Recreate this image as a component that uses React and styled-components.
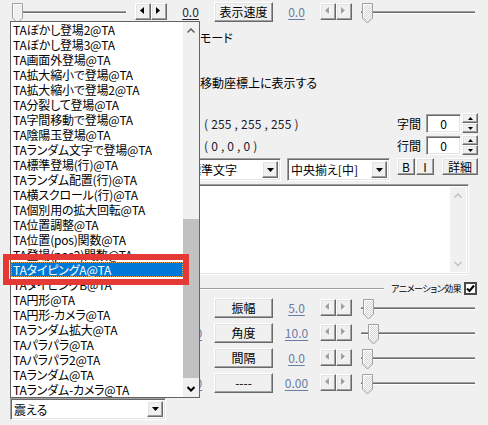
import React, { useId } from "react";
import styled, { createGlobalStyle, css } from "styled-components";

const GlobalStyle = createGlobalStyle`
  html, body { margin: 0; padding: 0; background: #f0f0f0; }
  body {
    width: 488px; height: 425px; overflow: hidden;
    font-family: "Noto Sans CJK JP", "Noto Sans", sans-serif;
    font-size: 12px; color: #000;
    font-feature-settings: "palt";
  }
  * { box-sizing: border-box; }
`;

const LIST_ITEMS = [
  "TAぼかし登場2@TA", "TAぼかし登場3@TA", "TA画面外登場@TA", "TA拡大縮小で登場@TA",
  "TA拡大縮小で登場2@TA", "TA分裂して登場@TA", "TA字間移動で登場@TA", "TA陰陽玉登場@TA",
  "TAランダム文字で登場@TA", "TA標準登場(行)@TA", "TAランダム配置(行)@TA", "TA横スクロール(行)@TA",
  "TA個別用の拡大回転@TA", "TA位置調整@TA", "TA位置(pos)関数@TA", "TA登場(pos2)関数@TA",
  "TAタイピングA@TA", "TAタイピングB@TA", "TA円形@TA", "TA円形-カメラ@TA",
  "TAランダム拡大@TA", "TAパラパラ@TA", "TAパラパラ2@TA", "TAランダム@TA", "TAランダム-カメラ@TA",
];
const SELECTED = 16;

const PARAMS = [
  { label: "振幅", left: "5.0", right: "5.0", thumb: 5 },
  { label: "角度", left: "10.0", right: "10.0", thumb: 10 },
  { label: "間隔", left: "0.0", right: "0.0", thumb: 4 },
  { label: "----", left: "0.00", right: "0.00", thumb: 4 },
];

const raised = css`
  background: #f0f0f0;
  border: 1px solid;
  border-color: #fff #696969 #696969 #fff;
  box-shadow: inset -1px -1px #a0a0a0, inset 1px 1px #e3e3e3;
`;

const sunken = css`
  background: #fff;
  border: 1px solid;
  border-color: #a0a0a0 #fff #fff #a0a0a0;
  box-shadow: inset 1px 1px #696969, inset -1px -1px #e3e3e3;
`;

const Dialog = styled.div`
  position: relative;
  width: 488px;
  height: 425px;
  overflow: hidden;
  display: flex;
  flex-direction: column;
`;

const TopRow = styled.div`
  padding-top: 2px;
  height: 24px;
`;

const ParamGrid = styled.div`
  display: grid;
  grid-template-columns: 126px 32px 47px 59px 47px 32px 126px;
  grid-template-rows: 20px;
  padding-left: 9px;
  height: 20px;
  align-items: start;
`;

const SliderBox = styled.div`
  width: 120px;
  height: 20px;
  justify-self: ${(p) => (p.$side === "left" ? "start" : "end")};
  svg { display: block; overflow: visible; }
`;

const Spinner = styled.div`
  display: flex;
  margin-top: 1px;
  justify-self: ${(p) => (p.$side === "left" ? "end" : "start")};
`;

const SpinBtn = styled.div`
  ${raised};
  width: 16px;
  height: 17px;
  display: flex;
  align-items: center;
  justify-content: center;
  svg { display: block; }
`;

const Value = styled.span`
  text-align: center;
  line-height: 20px;
  text-decoration: underline;
  text-underline-offset: 2px;
  color: ${(p) => p.$color};
  font-size: 12px;
`;

const Button = styled.div`
  ${raised};
  width: ${(p) => p.$w || 59}px;
  height: ${(p) => p.$h || 20}px;
  display: flex;
  align-items: center;
  justify-content: center;
  font-size: ${(p) => p.$fs || 12}px;
  line-height: 1;
  white-space: nowrap;
`;

const Middle = styled.div`
  display: flex;
  flex-direction: column;
  margin-left: 185px;
  margin-right: 10px;
`;

const Line = styled.div`
  height: ${(p) => p.$h}px;
  margin-top: ${(p) => p.$mt || 0}px;
  padding-left: ${(p) => p.$pl || 15}px;
  display: flex;
  align-items: center;
  white-space: nowrap;
`;

const Coords = styled.span`
  color: #1a1a2a;
  letter-spacing: 0.2px;
`;

const FieldLabel = styled.span`
  margin-left: auto;
  margin-right: 5px;
`;

const NumInput = styled.div`
  ${sunken};
  width: 35px;
  height: 19px;
  display: flex;
  align-items: center;
  justify-content: center;
  margin-right: 1px;
`;

const VSpin = styled.div`
  display: flex;
  flex-direction: column;
`;

const VSpinBtn = styled.div`
  ${raised};
  width: 16px;
  height: 10px;
  display: flex;
  align-items: center;
  justify-content: center;
  svg { display: block; }
`;

const ControlsRow = styled.div`
  display: flex;
  align-items: flex-start;
  margin-top: 2px;
  height: 23px;
`;

const Combo = styled.div`
  ${sunken};
  width: ${(p) => p.$w}px;
  height: ${(p) => p.$h || 23}px;
  display: flex;
  padding: 2px;
`;

const ComboText = styled.div`
  flex: 1;
  padding-left: 1px;
  display: flex;
  align-items: center;
  white-space: nowrap;
  overflow: hidden;
`;

const ComboArrow = styled.div`
  ${raised};
  width: 16px;
  height: 100%;
  display: flex;
  align-items: center;
  justify-content: center;
  svg { display: block; }
`;

const Gap = styled.div`
  width: ${(p) => p.$w}px;
  flex: none;
`;

const TextArea = styled.div`
  ${sunken};
  margin-top: 3px;
  height: 91px;
  width: 284px;
  display: flex;
  justify-content: flex-end;
  padding: 2px;
`;

const AreaScroll = styled.div`
  width: 16px;
  background: #f0f0f0;
  display: flex;
  flex-direction: column;
  justify-content: space-between;
`;

const ScrollArrow = styled.div`
  height: 17px;
  display: flex;
  align-items: center;
  justify-content: center;
  svg { display: block; }
`;

const SepRow = styled.div`
  margin-top: 6px;
  height: 15px;
  display: flex;
  align-items: center;
`;

const SepLine = styled.div`
  width: 199px;
  height: 2px;
  border-top: 1px solid #a0a0a0;
  border-bottom: 1px solid #fff;
`;

const SmallLabel = styled.span`
  margin-left: 7px;
  font-size: 9px;
  letter-spacing: -0.4px;
  white-space: nowrap;
`;

const CheckBox = styled.div`
  margin-left: auto;
  margin-right: 1px;
  width: 13px;
  height: 13px;
  background: #fff;
  border: 2px solid #4a4a4a;
  display: flex;
  align-items: center;
  justify-content: center;
  svg { display: block; }
`;

const ParamList = styled.div`
  margin-top: 2px;
  display: flex;
  flex-direction: column;
  gap: 5px;
`;

const BottomCombo = styled(Combo)`
  margin-top: 5px;
  margin-left: 10px;
`;

const ListBox = styled.div`
  position: absolute;
  left: 10px;
  top: 21px;
  width: 190px;
  height: 377px;
  border: 1px solid #646464;
  background: #fff;
  display: flex;
`;

const ItemsCol = styled.div`
  flex: 1;
  display: flex;
  flex-direction: column;
  overflow: hidden;
`;

const Item = styled.div`
  height: 15px;
  line-height: 15px;
  padding-left: 2px;
  white-space: nowrap;
  letter-spacing: -0.2px;
  ${(p) =>
    p.$selected &&
    css`
      background: #0078d7;
      color: #fff;
      outline: 1px dotted #f2a33a;
      outline-offset: -1px;
    `}
`;

const ListScroll = styled.div`
  width: 16px;
  background: #f0f0f0;
  display: flex;
  flex-direction: column;
`;

const ScrollTrack = styled.div`
  flex: 1;
  display: flex;
  flex-direction: column;
`;

const ScrollThumb = styled.div`
  margin-top: ${(p) => p.$offset}px;
  height: ${(p) => p.$size}px;
  background: #c1c1c1;
`;

const Highlight = styled.div`
  position: absolute;
  left: 3px;
  top: 254px;
  width: 186px;
  height: 31px;
  border: 6px solid #e53935;
  pointer-events: none;
`;

function HArrow({ dir, disabled }) {
  const main = dir === "left" ? "4,0 0,3.5 4,7" : "0,0 4,3.5 0,7";
  const shadow = dir === "left" ? "5,1 1,4.5 5,8" : "1,1 5,4.5 1,8";
  return (
    <svg width="6" height="9" viewBox="0 0 6 9">
      {disabled && <polygon points={shadow} fill="#fff" />}
      <polygon points={main} fill={disabled ? "#a0a0a0" : "#000"} />
    </svg>
  );
}

function VArrow({ dir, w = 7, h = 4 }) {
  const pts = dir === "up" ? `0,${h} ${w / 2},0 ${w},${h}` : `0,0 ${w / 2},${h} ${w},0`;
  return (
    <svg width={w} height={h} viewBox={`0 0 ${w} ${h}`}>
      <polygon points={pts} fill="#000" />
    </svg>
  );
}

function Chevron({ dir, color, sw = 1.5 }) {
  const pts = dir === "up" ? "0.5,4.5 4,1 7.5,4.5" : "0.5,1 4,4.5 7.5,1";
  return (
    <svg width="8" height="6" viewBox="0 0 8 6">
      <polyline points={pts} fill="none" stroke={color} strokeWidth={sw} />
    </svg>
  );
}

function Slider({ thumb, enabled, side }) {
  const id = useId().replace(/:/g, "");
  const t = thumb;
  return (
    <SliderBox $side={side}>
      <svg width="120" height="24" viewBox="0 0 120 24">
        <defs>
          <pattern id={`p${id}`} width="2" height="2" patternUnits="userSpaceOnUse">
            <rect width="2" height="2" fill="#fff" />
            <rect width="1" height="1" fill="#d4d4d4" />
            <rect x="1" y="1" width="1" height="1" fill="#d4d4d4" />
          </pattern>
        </defs>
        <rect x="3" y="9" width="114" height="1" fill="#a0a0a0" />
        <rect x="3" y="10" width="114" height="1" fill="#6a6a6a" />
        <rect x="3" y="11" width="114" height="1" fill="#fff" />
        <polygon
          points={`${t + 0.5},1.5 ${t + 10.5},1.5 ${t + 10.5},16 ${t + 5.5},21 ${t + 0.5},16`}
          fill={enabled ? "#f0f0f0" : `url(#p${id})`}
          stroke="#a0a0a0"
        />
        <polyline
          points={`${t + 1.5},15.5 ${t + 1.5},2.5 ${t + 9.5},2.5`}
          fill="none"
          stroke="#fff"
        />
      </svg>
    </SliderBox>
  );
}

function HSpinner({ side, disabled }) {
  return (
    <Spinner $side={side}>
      <SpinBtn>
        <HArrow dir="left" disabled={disabled} />
      </SpinBtn>
      <SpinBtn>
        <HArrow dir="right" disabled={disabled} />
      </SpinBtn>
    </Spinner>
  );
}

function ParamRow({ label, left, right, thumb, leftColor, leftEnabled }) {
  return (
    <ParamGrid>
      <Slider side="left" thumb={3} enabled={leftEnabled} />
      <HSpinner side="left" disabled={!leftEnabled} />
      <Value $color={leftColor}>{left}</Value>
      <Button>{label}</Button>
      <Value $color="#6b7ca3">{right}</Value>
      <HSpinner side="right" disabled />
      <Slider side="right" thumb={thumb} />
    </ParamGrid>
  );
}

function SpacingField({ label }) {
  return (
    <>
      <FieldLabel>{label}</FieldLabel>
      <NumInput>0</NumInput>
      <VSpin>
        <VSpinBtn>
          <VArrow dir="up" w={5} h={3} />
        </VSpinBtn>
        <VSpinBtn>
          <VArrow dir="down" w={5} h={3} />
        </VSpinBtn>
      </VSpin>
    </>
  );
}

export default function App() {
  return (
    <>
      <GlobalStyle />
      <Dialog>
        <TopRow>
          <ParamRow label="表示速度" left="0.0" right="0.0" thumb={4} leftColor="#1c2533" leftEnabled />
        </TopRow>

        <Middle>
          <Line $h={26}>モード</Line>
          <Line $h={21} />
          <Line $h={22}>移動座標上に表示する</Line>
          <Line $h={22} $mt={19} $pl={19}>
            <Coords>( 255 , 255 , 255 )</Coords>
            <SpacingField label="字間" />
          </Line>
          <Line $h={22} $pl={19}>
            <Coords>( 0 , 0 , 0 )</Coords>
            <SpacingField label="行間" />
          </Line>
          <ControlsRow>
            <Combo $w={96}>
              <ComboText>標準文字</ComboText>
              <ComboArrow>
                <VArrow dir="down" />
              </ComboArrow>
            </Combo>
            <Gap $w={6} />
            <Combo $w={103}>
              <ComboText>中央揃え[中]</ComboText>
              <ComboArrow>
                <VArrow dir="down" />
              </ComboArrow>
            </Combo>
            <Gap $w={7} />
            <Button $w={18} $h={17}>B</Button>
            <Gap $w={1} />
            <Button $w={18} $h={17}>I</Button>
            <Gap $w={8} />
            <Button $w={36} $h={17}>詳細</Button>
          </ControlsRow>
          <TextArea>
            <AreaScroll>
              <ScrollArrow>
                <Chevron dir="up" color="#c0c0c0" />
              </ScrollArrow>
              <ScrollArrow>
                <Chevron dir="down" color="#c0c0c0" />
              </ScrollArrow>
            </AreaScroll>
          </TextArea>
          <SepRow>
            <SepLine />
            <SmallLabel>アニメーション効果</SmallLabel>
            <CheckBox>
              <svg width="9" height="9" viewBox="0 0 9 9">
                <polyline points="1,4.5 3.5,7 8,1.5" fill="none" stroke="#000" strokeWidth="2" />
              </svg>
            </CheckBox>
          </SepRow>
        </Middle>

        <ParamList>
          {PARAMS.map((p) => (
            <ParamRow key={p.label} {...p} leftColor="#6b7ca3" />
          ))}
        </ParamList>

        <BottomCombo $w={156} $h={22}>
          <ComboText>震える</ComboText>
          <ComboArrow>
            <VArrow dir="down" />
          </ComboArrow>
        </BottomCombo>

        <ListBox>
          <ItemsCol>
            {LIST_ITEMS.map((it, i) => (
              <Item key={it} $selected={i === SELECTED}>
                {it}
              </Item>
            ))}
          </ItemsCol>
          <ListScroll>
            <ScrollArrow>
              <Chevron dir="up" color="#606060" />
            </ScrollArrow>
            <ScrollTrack>
              <ScrollThumb $offset={180} $size={159} />
            </ScrollTrack>
            <ScrollArrow>
              <Chevron dir="down" color="#000" sw={2} />
            </ScrollArrow>
          </ListScroll>
        </ListBox>

        <Highlight />
      </Dialog>
    </>
  );
}
